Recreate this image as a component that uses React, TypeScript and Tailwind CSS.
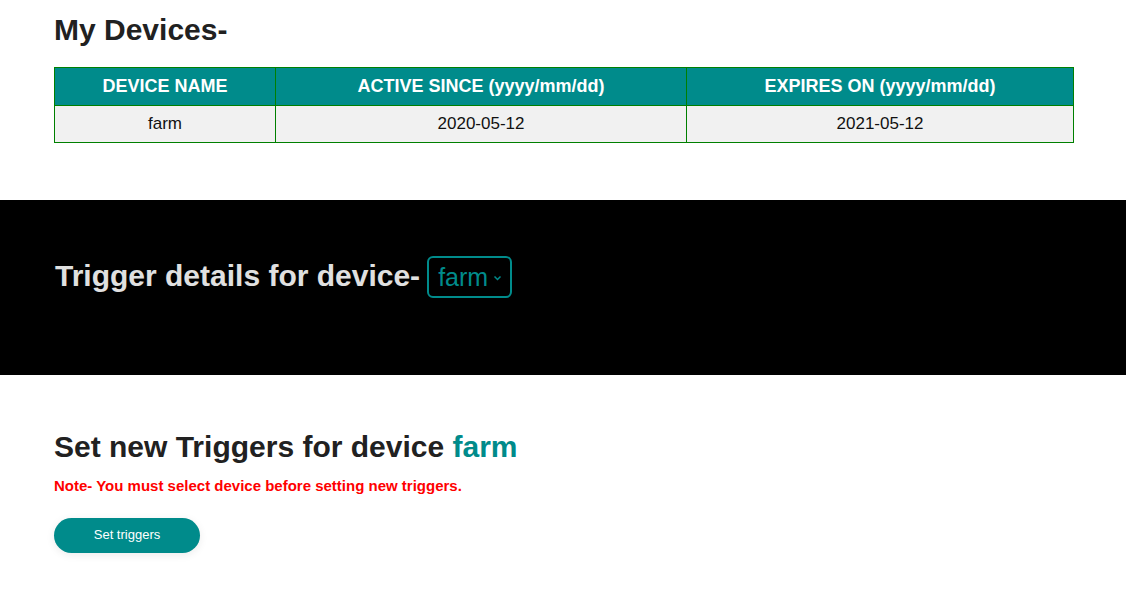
export default function App() {
  const devices = [{ name: "farm", active: "2020-05-12", expires: "2021-05-12" }];

  return (
    <div className="min-h-[605px] bg-white font-['Liberation_Sans',Arial,sans-serif] text-[#212121]">
      {/* My devices */}
      <section className="pl-[54px] pr-[52px] pt-[13px]">
        <h1 className="text-[30px] font-bold leading-[34px]">My Devices-</h1>
        <table className="mt-[20px] w-full border-collapse border border-[#008000] text-center">
          <thead>
            <tr className="h-[38px] bg-[#008b8b] text-[18px] font-bold text-white">
              <th className="w-[221px] border border-[#008000] font-bold">DEVICE NAME</th>
              <th className="w-[411px] border border-[#008000] font-bold">ACTIVE SINCE (yyyy/mm/dd)</th>
              <th className="border border-[#008000] font-bold">EXPIRES ON (yyyy/mm/dd)</th>
            </tr>
          </thead>
          <tbody>
            {devices.map((d) => (
              <tr key={d.name} className="h-[37px] bg-[#f1f1f1] text-[17px] text-[#111]">
                <td className="border border-[#008000]">{d.name}</td>
                <td className="border border-[#008000]">{d.active}</td>
                <td className="border border-[#008000]">{d.expires}</td>
              </tr>
            ))}
          </tbody>
        </table>
      </section>

      {/* Trigger details */}
      <section className="mt-[57px] h-[175px] bg-black pl-[55px] pt-[56px]">
        <div className="flex items-baseline gap-[7px]">
          <h2 className="text-[30px] font-bold leading-[34px] text-[#e0e0e0]">Trigger details for device-</h2>
          <div className="flex h-[42px] w-[85px] items-center rounded-[6px] border-2 border-[#008b8b] pl-[9px] pr-[8px] text-[#008b8b]">
            <span className="text-[25px] leading-[28px]">farm</span>
            <svg className="ml-auto mt-[1px]" width="9" height="6" viewBox="0 0 9 6" fill="none">
              <path d="M1.5 1.5 L4.5 4.5 L7.5 1.5" stroke="#008b8b" strokeWidth="1.5" />
            </svg>
          </div>
        </div>
      </section>

      {/* Set new triggers */}
      <section className="pl-[54px] pt-[55px]">
        <h2 className="text-[30px] font-bold leading-[34px]">
          Set new Triggers for device <span className="text-[#008b8b]">farm</span>
        </h2>
        <p className="mt-[11px] text-[15px] font-bold text-[#ff0000]">
          Note- You must select device before setting new triggers.
        </p>
        <button className="mt-[20px] h-[35px] w-[146px] rounded-full bg-[#008b8b] text-[13px] text-white shadow-[0_2px_8px_rgba(0,0,0,0.08)]">
          Set triggers
        </button>
      </section>
    </div>
  );
}
